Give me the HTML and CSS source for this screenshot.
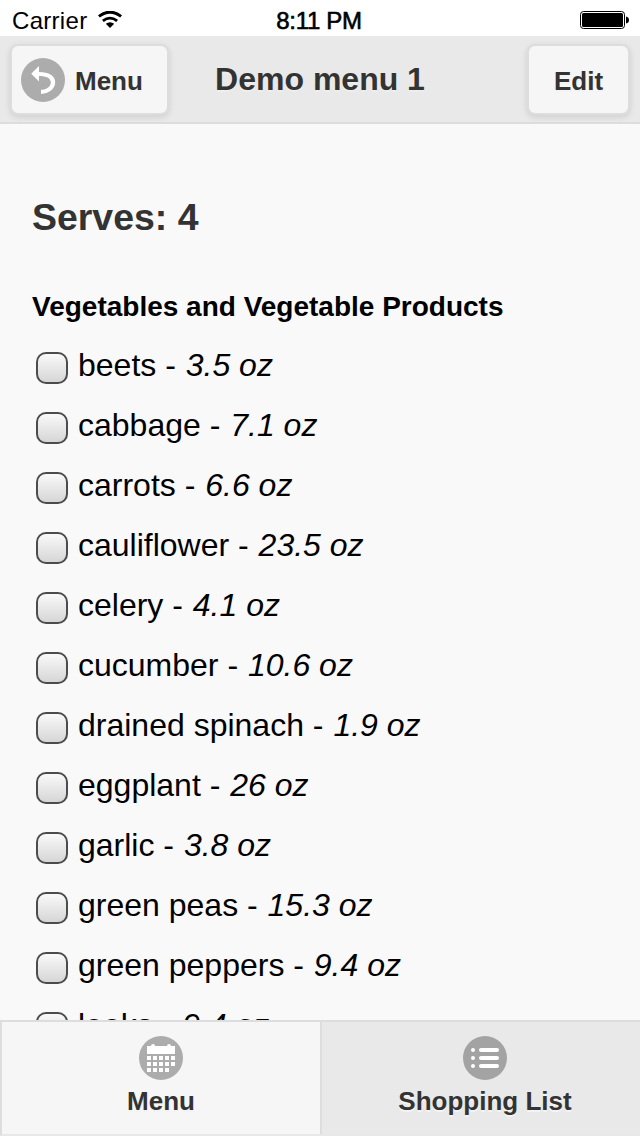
FILE: index.html
```html
<!DOCTYPE html>
<html>
<head>
    <meta charset="utf-8">
    <title>Demo menu 1</title>
    <link rel="stylesheet" href="styles.css">
</head>
<body>
    <div class="status-bar">
        <div class="carrier">
            <span>Carrier</span>
            <svg class="wifi" width="24" height="18" viewBox="0 0 24 18">
                <path d="M0.9 5.4 Q12 -3.1 23.1 5.4" fill="none" stroke="#000" stroke-width="3"/>
                <path d="M4.9 9.9 Q12 4.3 19.1 9.9" fill="none" stroke="#000" stroke-width="2.8"/>
                <path d="M7.8 12.8 Q12 9.6 16.2 12.8 L12 17 Z"/>
            </svg>
        </div>
        <div class="clock">8:11 PM</div>
        <svg class="battery" width="49" height="20" viewBox="0 0 49 20">
            <rect x="0.5" y="1.5" width="44" height="17" rx="3" fill="#fff" stroke="#000"/>
            <rect x="2" y="3" width="41" height="14" rx="1.5"/>
            <path d="M46 6.5 Q49 7 49 10 Q49 13 46 13.5 Z"/>
        </svg>
    </div>

    <header class="header">
        <a class="btn btn-back">
            <svg width="44" height="44" viewBox="0 0 44 44">
                <circle cx="22" cy="22" r="22" fill="#acacac"/>
                <path d="M10.2 15.8 L18 8 V14 C28 14 34.2 18 34.2 24.3 C34.2 31 28 35.6 20 36 V31.8 C26 31.4 29.8 28.6 29.8 24.4 C29.8 20 25.5 17.9 18 17.9 V23.6 Z" fill="#fff"/>
            </svg>
            <span>Menu</span>
        </a>
        <h1>Demo menu 1</h1>
        <a class="btn btn-edit"><span>Edit</span></a>
    </header>

    <main class="content">
        <h2>Serves: 4</h2>
        <h3>Vegetables and Vegetable Products</h3>
        <ul class="items">
            <li><input type="checkbox"><span>beets - <em>3.5 oz</em></span></li>
            <li><input type="checkbox"><span>cabbage - <em>7.1 oz</em></span></li>
            <li><input type="checkbox"><span>carrots - <em>6.6 oz</em></span></li>
            <li><input type="checkbox"><span>cauliflower - <em>23.5 oz</em></span></li>
            <li><input type="checkbox"><span>celery - <em>4.1 oz</em></span></li>
            <li><input type="checkbox"><span>cucumber - <em>10.6 oz</em></span></li>
            <li><input type="checkbox"><span>drained spinach - <em>1.9 oz</em></span></li>
            <li><input type="checkbox"><span>eggplant - <em>26 oz</em></span></li>
            <li><input type="checkbox"><span>garlic - <em>3.8 oz</em></span></li>
            <li><input type="checkbox"><span>green peas - <em>15.3 oz</em></span></li>
            <li><input type="checkbox"><span>green peppers - <em>9.4 oz</em></span></li>
            <li><input type="checkbox"><span>leeks - <em>9.4 oz</em></span></li>
        </ul>
    </main>

    <footer class="tabs">
        <a class="tab">
            <svg width="44" height="44" viewBox="0 0 44 44">
                <circle cx="22" cy="22" r="22" fill="#acacac"/>
                <path fill="#fff" d="M8 10h4a2 2 0 0 1 4 0h12a2 2 0 0 1 4 0h4v8H8z
                    M8 20h4v4H8z M14 20h4v4h-4z M20 20h4v4h-4z M26 20h4v4h-4z M32 20h4v4h-4z
                    M8 26h4v4H8z M14 26h4v4h-4z M20 26h4v4h-4z M26 26h4v4h-4z M32 26h4v4h-4z
                    M8 32h4v4H8z M14 32h4v4h-4z M20 32h4v4h-4z M26 32h4v4h-4z"/>
            </svg>
            <span>Menu</span>
        </a>
        <a class="tab active">
            <svg width="44" height="44" viewBox="0 0 44 44">
                <circle cx="22" cy="22" r="22" fill="#a3a3a3"/>
                <g fill="#fff">
                    <circle cx="10" cy="14" r="2"/>
                    <circle cx="10" cy="22" r="2"/>
                    <circle cx="10" cy="30" r="2"/>
                    <rect x="16" y="12" width="20" height="4" rx="2"/>
                    <rect x="16" y="20" width="20" height="4" rx="2"/>
                    <rect x="16" y="28" width="20" height="4" rx="2"/>
                </g>
            </svg>
            <span>Shopping List</span>
        </a>
    </footer>
</body>
</html>
```
FILE: styles.css
```css
* { box-sizing: border-box; }
body {
    margin: 0;
    height: 1136px;
    display: flex;
    flex-direction: column;
    overflow: hidden;
    background: #f9f9f9;
    color: #000;
    font-family: "Liberation Sans", Arial, sans-serif;
}
h1, h2, h3 { margin: 0; }

/* status bar */
.status-bar {
    flex: none;
    height: 36px;
    padding: 5px 11px 0 12px;
    display: grid;
    grid-template-columns: 1fr auto 1fr;
    align-items: center;
    background: #fff;
    font-size: 24px;
}
.carrier { display: flex; align-items: center; gap: 11px; letter-spacing: 0.3px; }
.wifi { margin-bottom: 2px; }
.clock { padding-right: 3px; -webkit-text-stroke: 0.6px #000; letter-spacing: -0.3px; }
.battery { justify-self: end; margin-bottom: 1px; }

/* header */
.header {
    flex: none;
    height: 88px;
    padding: 8px 10px 0;
    display: grid;
    grid-template-columns: 1fr auto 1fr;
    align-items: start;
    background: #e9e9e9;
    border-bottom: 2px solid #ddd;
    color: #333;
}
.header h1 { font-size: 32px; line-height: 70px; text-shadow: 0 2px 0 #eee; }
.btn {
    display: flex;
    align-items: center;
    height: 71px;
    padding-top: 1px;
    border: 2px solid #ddd;
    border-radius: 8px;
    background: #f6f6f6;
    box-shadow: 0 2px 6px rgba(0, 0, 0, 0.12);
    font-size: 26px;
    font-weight: bold;
    text-shadow: 0 2px 0 #f3f3f3;
}
.btn span { padding-top: 2px; }
.btn-back { width: 159px; padding-left: 9px; gap: 10px; }
.btn-edit { width: 103px; justify-content: center; justify-self: end; }

/* list */
.content { flex: 1; min-height: 0; overflow: hidden; padding: 71px 32px 0; }
.content h2 {
    font-size: 37.44px;
    line-height: 44px;
    color: #333;
}
.content h3 { margin-top: 48px; font-size: 28px; line-height: 40px; }
.items { list-style: none; margin: 8px 0 0; padding: 0 0 0 4px; }
.items li {
    display: flex;
    align-items: center;
    gap: 10px;
    height: 60px;
    font-size: 32px;
    line-height: 60px;
}
.items em { margin-left: 1px; }
.items input {
    appearance: none;
    width: 32px;
    height: 32px;
    margin: 6px 0 0;
    border: 2px solid #4c4c4c;
    border-radius: 10px;
    background: linear-gradient(#f9f9f9, #d6d6d6);
}

/* bottom tabs */
.tabs {
    flex: none;
    display: flex;
    height: 116px;
    border: 2px solid #ddd;
    border-right: 0;
    border-bottom-color: #e8e8e8;
    color: #333;
    font-size: 26px;
    font-weight: bold;
}
.tab {
    flex: 1;
    display: flex;
    flex-direction: column;
    align-items: center;
    gap: 6px;
    padding-top: 14px;
    background: #f6f6f6;
    text-shadow: 0 2px 0 #f3f3f3;
}
.tab:first-child { flex: 0 0 318px; }
.tab.active { padding-left: 8px; background: #e9e9e9; border-left: 2px solid #ddd; }
```
